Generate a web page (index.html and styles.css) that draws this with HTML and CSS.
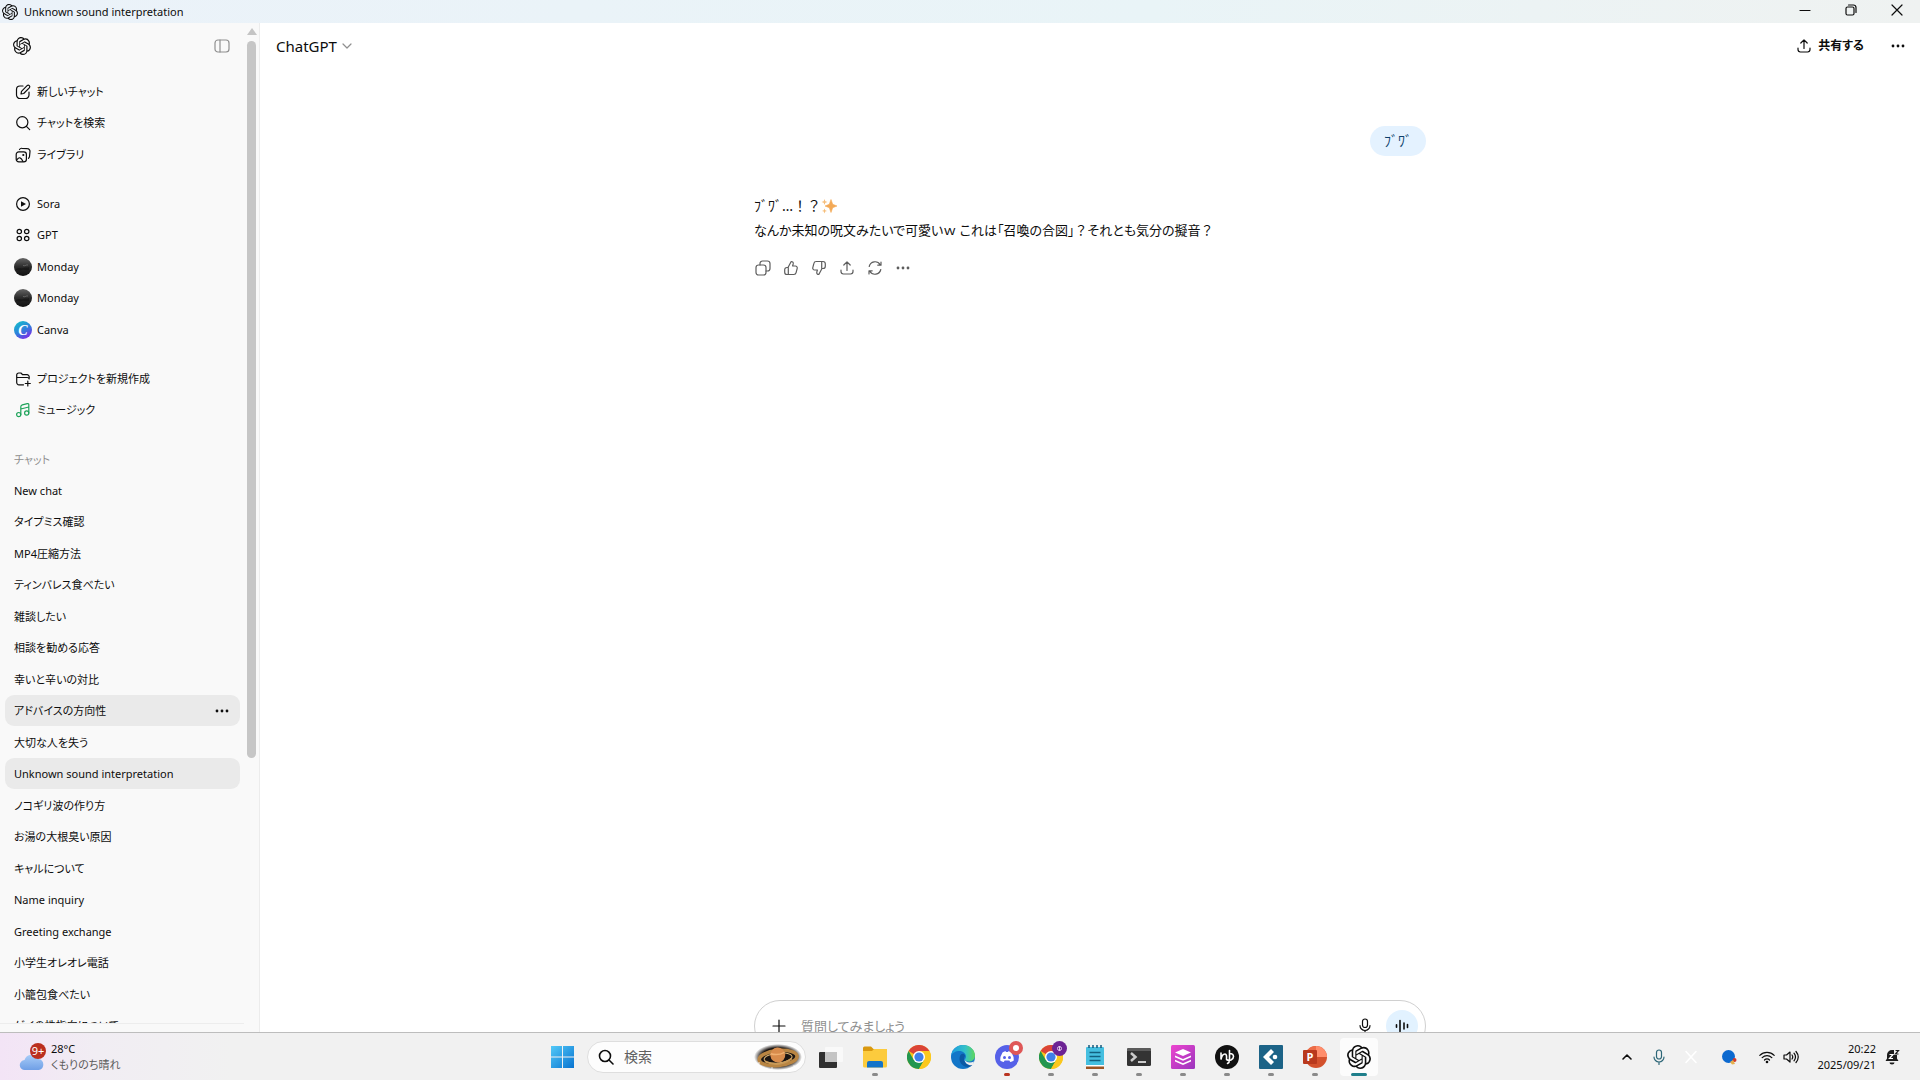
FILE: index.html
```html
<!DOCTYPE html>
<html lang="ja">
<head>
<meta charset="utf-8">
<title>Unknown sound interpretation</title>
<link rel="stylesheet" href="styles.css">
</head>
<body>
<svg class="sprite" aria-hidden="true">
  <symbol id="openai" viewBox="0 0 24 24"><path fill="currentColor" d="M22.2819 9.8211a5.9847 5.9847 0 0 0-.5157-4.9108 6.0462 6.0462 0 0 0-6.5098-2.9A6.0651 6.0651 0 0 0 4.9807 4.1818a5.9847 5.9847 0 0 0-3.9977 2.9 6.0462 6.0462 0 0 0 .7427 7.0966 5.98 5.98 0 0 0 .511 4.9107 6.051 6.051 0 0 0 6.5146 2.9001A5.9847 5.9847 0 0 0 13.2599 24a6.0557 6.0557 0 0 0 5.7718-4.2058 5.9894 5.9894 0 0 0 3.9977-2.9001 6.0557 6.0557 0 0 0-.7475-7.0729zm-9.022 12.6081a4.4755 4.4755 0 0 1-2.8764-1.0408l.1419-.0804 4.7783-2.7582a.7948.7948 0 0 0 .3927-.6813v-6.7369l2.02 1.1686a.071.071 0 0 1 .038.052v5.5826a4.504 4.504 0 0 1-4.4945 4.4944zm-9.6607-4.1254a4.4708 4.4708 0 0 1-.5346-3.0137l.142.0852 4.783 2.7582a.7712.7712 0 0 0 .7806 0l5.8428-3.3685v2.3324a.0804.0804 0 0 1-.0332.0615L9.74 19.9502a4.4992 4.4992 0 0 1-6.1408-1.6464zM2.3408 7.8956a4.485 4.485 0 0 1 2.3655-1.9728V11.6a.7664.7664 0 0 0 .3879.6765l5.8144 3.3543-2.0201 1.1685a.0757.0757 0 0 1-.071 0l-4.8303-2.7865A4.504 4.504 0 0 1 2.3408 7.872zm16.5963 3.8558L13.1038 8.364 15.1192 7.2a.0757.0757 0 0 1 .071 0l4.8303 2.7913a4.4944 4.4944 0 0 1-.6765 8.1042v-5.6772a.79.79 0 0 0-.407-.667zm2.0107-3.0231l-.142-.0852-4.7735-2.7818a.7759.7759 0 0 0-.7854 0L9.409 9.2297V6.8974a.0662.0662 0 0 1 .0284-.0615l4.8303-2.7866a4.4992 4.4992 0 0 1 6.6802 4.66zM8.3065 12.863l-2.02-1.1638a.0804.0804 0 0 1-.038-.0567V6.0742a4.4992 4.4992 0 0 1 7.3757-3.4537l-.142.0805L8.704 5.459a.7948.7948 0 0 0-.3927.6813zm1.0976-2.3654l2.602-1.4998 2.6069 1.4998v2.9994l-2.5974 1.4997-2.6067-1.4997Z"/></symbol>
  <symbol id="dots" viewBox="0 0 16 16"><g fill="currentColor"><circle cx="3" cy="8" r="1.4"/><circle cx="8" cy="8" r="1.4"/><circle cx="13" cy="8" r="1.4"/></g></symbol>
  <symbol id="share" viewBox="0 0 16 16"><path class="line" d="M2 10v1.6A2.4 2.4 0 0 0 4.4 14h7.200A2.4 2.4 0 0 0 14 11.600V10M8 10.500V2M4.800 5 8 1.800 11.200 5"/></symbol>
  <symbol id="monday" viewBox="0 0 18 18"><circle cx="9" cy="9" r="9" fill="url(#moon)"/><path d="M2 11c3-2 5 0 7-1s4 0 6-1v3c-4 1-5-1-7 0s-4 0-6 0z" fill="#000" opacity=".3"/><path d="M9 7.500c2 1 3-1 5-.5" stroke="#999" stroke-width=".8" fill="none" opacity=".6"/></symbol>
  <symbol id="chrome" viewBox="0 0 24 24"><circle cx="12" cy="12" r="12" fill="#f9c31b"/><path d="M12 12 1.600 6A12 12 0 0 1 22.400 6L12 6z" fill="#db4437"/><path d="M1.600 6A12 12 0 0 0 12 24l5.200-9L12 12 6.800 15z" fill="#23964f"/><path d="M12 6h10.400A12 12 0 0 1 12 24l5.200-9z" fill="#fbc81e"/><circle cx="12" cy="12" r="6" fill="#fff"/><circle cx="12" cy="12" r="4.600" fill="#3f7fe8"/></symbol>
  <defs>
    <linearGradient id="moon" x1="0" y1="0" x2="0" y2="1"><stop offset="0" stop-color="#666"/><stop offset=".5" stop-color="#2a2a2a"/><stop offset="1" stop-color="#111"/></linearGradient>
    <linearGradient id="canvaFill" x1=".1" y1="0" x2=".7" y2="1"><stop offset="0" stop-color="#12c3c9"/><stop offset=".55" stop-color="#2f80dc"/><stop offset="1" stop-color="#7d2ae7"/></linearGradient>
    <linearGradient id="winFill" x1="0" y1="0" x2="1" y2="1"><stop offset="0" stop-color="#52c9f8"/><stop offset="1" stop-color="#0873d0"/></linearGradient>
    <linearGradient id="edgeTop" x1="0" y1="0" x2="1" y2="0"><stop offset="0" stop-color="#1a9be0"/><stop offset=".6" stop-color="#35c1c8"/><stop offset="1" stop-color="#5fd85a"/></linearGradient>
    <linearGradient id="stackFill" x1="0" y1="0" x2="1" y2="1"><stop offset="0" stop-color="#ee45cf"/><stop offset="1" stop-color="#9a35bd"/></linearGradient>
    <linearGradient id="cloudFill" x1="0" y1="0" x2="0" y2="1"><stop offset="0" stop-color="#a9cdf8"/><stop offset="1" stop-color="#6f9fe6"/></linearGradient>
    <radialGradient id="space"><stop offset=".7" stop-color="#1b1512"/><stop offset="1" stop-color="#1b1512" stop-opacity="0"/></radialGradient>
  </defs>
</svg>

<header class="titlebar">
  <svg class="i16"><use href="#openai"/></svg>
  <span class="titlebar-name">Unknown sound interpretation</span>
  <button class="win-btn" aria-label="最小化"><svg class="i12" viewBox="0 0 12 12"><path class="line" d="M1 6.500h10"/></svg></button>
  <button class="win-btn" aria-label="元に戻す"><svg class="i12" viewBox="0 0 12 12"><rect class="line" x="1" y="3" width="8" height="8" rx="1.500"/><path class="line" d="M3.500 1h5A2.500 2.500 0 0 1 11 3.500v5"/></svg></button>
  <button class="win-btn" aria-label="閉じる"><svg class="i12" viewBox="0 0 12 12"><path class="line" d="m1 1 10 10M11 1 1 11"/></svg></button>
</header>

<div class="workspace">
  <aside class="sidebar">
    <div class="sidebar-content">
      <div class="sidebar-head">
        <a href="#" aria-label="ホーム"><svg class="i18"><use href="#openai"/></svg></a>
        <button class="icon-btn muted" aria-label="サイドバーを閉じる"><svg class="i16" viewBox="0 0 16 16"><rect class="line" x="1" y="2" width="14" height="12" rx="3"/><path class="line" d="M6 2v12"/></svg></button>
      </div>
      <nav class="sidebar-nav">
        <ul class="group">
          <li><a class="row" href="#"><svg class="i18" viewBox="0 0 18 18"><path class="line" d="M9 3H6a3.500 3.500 0 0 0-3.500 3.500V12A3.500 3.500 0 0 0 6 15.500h5.500A3.500 3.500 0 0 0 15 12V9M7 11l.5-2.700 5.600-5.600a1.500 1.500 0 0 1 2.200 2.200L9.700 10.500z"/></svg>新しいチャット</a></li>
          <li><a class="row" href="#"><svg class="i18" viewBox="0 0 18 18"><circle class="line" cx="8.300" cy="8.300" r="5.600"/><path class="line" d="m12.400 12.400 3.300 3.300"/></svg>チャットを検索</a></li>
          <li><a class="row" href="#"><svg class="i18" viewBox="0 0 18 18"><rect class="line" x="2.200" y="5.800" width="10.200" height="10" rx="2.600"/><path class="line" d="M5.500 3.500A2.500 2.500 0 0 1 8 2.300l5.500.4A2.600 2.600 0 0 1 16 5.500l-.5 5a2.600 2.600 0 0 1-1 1.800M3 13.600c2-2.800 4-2.600 6 1.800"/><circle cx="9.300" cy="9" r="1.100" fill="currentColor"/></svg>ライブラリ</a></li>
        </ul>
        <ul class="group">
          <li><a class="row" href="#"><svg class="i18" viewBox="0 0 18 18"><circle class="line" cx="9" cy="9" r="6.400"/><path d="M7 6.200v5.600L12 9z" fill="currentColor"/></svg>Sora</a></li>
          <li><a class="row" href="#"><svg class="i18" viewBox="0 0 18 18"><g class="line"><circle cx="5.300" cy="5.500" r="2.200"/><circle cx="12.700" cy="5.500" r="2.200"/><circle cx="5.300" cy="12.500" r="2.200"/><circle cx="12.700" cy="12.500" r="2.200"/></g></svg>GPT</a></li>
          <li><a class="row" href="#"><svg class="i18"><use href="#monday"/></svg>Monday</a></li>
          <li><a class="row" href="#"><svg class="i18"><use href="#monday"/></svg>Monday</a></li>
          <li><a class="row" href="#"><svg class="i18" viewBox="0 0 18 18"><circle cx="9" cy="9" r="9" fill="url(#canvaFill)"/><text class="canva-mark" x="9" y="14" text-anchor="middle">C</text></svg>Canva</a></li>
        </ul>
        <ul class="group">
          <li><a class="row" href="#"><svg class="i18" viewBox="0 0 18 18"><path class="line" d="M9.500 14.800H5A2.300 2.300 0 0 1 2.700 12.500V5A2 2 0 0 1 4.700 3h2.200l1.800 1.700h4.200A2.200 2.200 0 0 1 15.200 7v1M2.700 7.500h10.500a2 2 0 0 1 2 1.500M13.800 11v5M11.300 13.500h5"/></svg>プロジェクトを新規作成</a></li>
          <li><a class="row" href="#"><svg class="i18 green" viewBox="0 0 18 18"><path class="line" d="M6.800 13.500V5.800c0-1 .6-1.600 1.500-1.900l5-1.300c.9-.2 1.500.2 1.500 1v8.300M6.800 8l8-2"/><circle class="line" cx="4.700" cy="13.600" r="2.100"/><circle class="line" cx="12.700" cy="12" r="2.100"/></svg>ミュージック</a></li>
        </ul>
        <h2 class="group-label">チャット</h2>
        <ul class="history">
          <li><a class="row" href="#">New chat</a></li>
          <li><a class="row" href="#">タイプミス確認</a></li>
          <li><a class="row" href="#">MP4圧縮方法</a></li>
          <li><a class="row" href="#">ティンバレス食べたい</a></li>
          <li><a class="row" href="#">雑談したい</a></li>
          <li><a class="row" href="#">相談を勧める応答</a></li>
          <li><a class="row" href="#">幸いと辛いの対比</a></li>
          <li class="selected"><a class="row" href="#">アドバイスの方向性</a><button class="icon-btn" aria-label="オプション"><svg class="i16"><use href="#dots"/></svg></button></li>
          <li><a class="row" href="#">大切な人を失う</a></li>
          <li class="selected"><a class="row" href="#">Unknown sound interpretation</a></li>
          <li><a class="row" href="#">ノコギリ波の作り方</a></li>
          <li><a class="row" href="#">お湯の大根臭い原因</a></li>
          <li><a class="row" href="#">キャルについて</a></li>
          <li><a class="row" href="#">Name inquiry</a></li>
          <li><a class="row" href="#">Greeting exchange</a></li>
          <li><a class="row" href="#">小学生オレオレ電話</a></li>
          <li><a class="row" href="#">小籠包食べたい</a></li>
          <li><a class="row" href="#">ゲイの性指向について</a></li>
        </ul>
      </nav>
    </div>
    <div class="scrollbar" aria-hidden="true"><span class="scroll-up"></span><span class="scroll-thumb"></span></div>
  </aside>

  <main class="main">
    <div class="main-head">
      <button class="model-btn">ChatGPT<svg class="i10 muted" viewBox="0 0 10 10"><path class="line" d="m1 3 4 4 4-4"/></svg></button>
      <button class="share-btn"><svg class="i16"><use href="#share"/></svg>共有する</button>
      <button class="icon-btn" aria-label="その他"><svg class="i16"><use href="#dots"/></svg></button>
    </div>
    <div class="thread">
      <p class="bubble">ﾌﾞﾜﾞ</p>
      <div class="reply">
        <p class="reply-exclaim">ﾌﾞﾜﾞ…！？<svg class="i16" viewBox="0 0 16 16" role="img" aria-label="きらきら"><path d="M10 1.500 11.700 6.300 16 8l-4.300 1.700L10 14.500 8.300 9.700 4 8l4.300-1.700z" fill="#f3a956" stroke="#f3a956" stroke-width=".6" stroke-linejoin="round"/><path d="m3.500 1 .8 2.200 2.200.8-2.200.8-.8 2.200-.8-2.200L.5 4l2.200-.8zM3.500 10.500l.7 1.700 1.800.7-1.800.7-.7 1.900-.7-1.900-1.800-.7 1.800-.7z" fill="#f6bd79"/></svg></p>
        <p class="reply-text">なんか未知の呪文みたいで可愛いｗ これは「召喚の合図」<span class="wide">？</span>それとも気分の擬音<span class="wide">？</span></p>
      </div>
      <div class="actions">
        <button class="icon-btn" aria-label="コピー"><svg class="i16" viewBox="0 0 16 16"><rect class="line" x="1" y="5" width="10" height="10" rx="2.500"/><path class="line" d="M5 5V3.500A2.500 2.500 0 0 1 7.500 1h5A2.500 2.500 0 0 1 15 3.500v5a2.500 2.500 0 0 1-2.500 2.500H11"/></svg></button>
        <button class="icon-btn" aria-label="良い回答"><svg class="i16" viewBox="0 0 16 16"><path class="line" d="M5 7.500 8.200 1.500c1.500 0 2.300 1 2 2.400L9.600 6h2.800a1.900 1.900 0 0 1 1.800 2.400l-1.100 4.200A2.400 2.400 0 0 1 10.800 14.500H4A2.300 2.300 0 0 1 1.700 12.200V9.800A2.300 2.300 0 0 1 4 7.500h1M5.300 7.500v7"/></svg></button>
        <button class="icon-btn" aria-label="良くない回答"><svg class="i16" viewBox="0 0 16 16"><path class="line" d="M11 8.500 7.800 14.500c-1.500 0-2.300-1-2-2.400L6.400 10H3.600a1.900 1.900 0 0 1-1.800-2.400l1.100-4.200A2.400 2.400 0 0 1 5.200 1.500H12a2.300 2.300 0 0 1 2.300 2.300v2.400A2.300 2.300 0 0 1 12 8.500h-1M10.700 8.500v-7"/></svg></button>
        <button class="icon-btn" aria-label="共有"><svg class="i16"><use href="#share"/></svg></button>
        <button class="icon-btn" aria-label="再生成"><svg class="i16" viewBox="0 0 16 16"><path class="line" d="M2.200 6.500a6 6 0 0 1 11-1.800M14 2v3.200h-3.200M13.800 9.500a6 6 0 0 1-11 1.800M2 14v-3.200h3.200"/></svg></button>
        <button class="icon-btn" aria-label="その他の操作"><svg class="i16"><use href="#dots"/></svg></button>
      </div>
    </div>
    <form class="composer">
      <button type="button" class="icon-btn" aria-label="追加"><svg class="i16" viewBox="0 0 16 16"><path class="line" d="M8 2v12M2 8h12"/></svg></button>
      <input type="text" class="prompt" placeholder="質問してみましょう" aria-label="質問してみましょう">
      <button type="button" class="icon-btn" aria-label="音声入力"><svg class="i16" viewBox="0 0 16 16"><rect class="line" x="5.500" y="1" width="5" height="8.500" rx="2.500"/><path class="line" d="M3 7.500a5 5 0 0 0 10 0M8 12.500V15"/></svg></button>
      <button type="button" class="voice-btn" aria-label="音声モード"><svg class="i16" viewBox="0 0 16 16"><path class="line thick" d="M2.500 6.800v2.400M6 2.500v11M10 5v6M13.500 6.500v3"/></svg></button>
    </form>
  </main>
</div>

<footer class="taskbar">
  <button class="weather">
    <svg class="weather-icon" viewBox="0 0 28 30"><path d="M6 28a5 5 0 0 1-.5-10 7.500 7.500 0 0 1 14-1A5.600 5.600 0 0 1 20 28z" fill="url(#cloudFill)"/><circle cx="19" cy="9" r="8" fill="#bb2f1e"/><text class="badge-text" x="19" y="13" text-anchor="middle">9+</text></svg>
    <span class="weather-text"><span>28°C</span><span class="weather-desc">くもりのち晴れ</span></span>
  </button>
  <div class="apps">
    <button class="app" aria-label="スタート"><svg class="i24" viewBox="0 0 24 24"><path d="M0 1h11v10.500H0zM12 1h11v10.500H12zM0 12.500h11V23H0zM12 12.500h11V23H12z" fill="url(#winFill)"/></svg></button>
    <label class="search">
      <svg class="i16" viewBox="0 0 16 16"><circle class="line thick" cx="7" cy="7" r="5.500"/><path class="line thick" d="m11 11 4 4"/></svg>
      <input type="text" class="search-input" placeholder="検索" aria-label="検索">
      <svg class="saturn" viewBox="0 0 48 26"><ellipse cx="24" cy="13" rx="24" ry="13" fill="url(#space)"/><g transform="rotate(-6 24 13)"><ellipse cx="24" cy="14" rx="19" ry="7.500" fill="none" stroke="#b98542" stroke-width="3.500"/><ellipse cx="24" cy="14" rx="14" ry="5" fill="none" stroke="#e0b878" stroke-width="1"/><circle cx="24" cy="11" r="7.500" fill="#d88c4c"/><path d="M17 9q7 3 14 0" stroke="#f0b070" stroke-width="1.500" fill="none"/><path d="M10.500 16Q24 24 37.500 16" stroke="#c99a58" stroke-width="2" fill="none"/></g><g fill="#fff"><circle cx="5" cy="19" r=".8"/><circle cx="18" cy="24" r=".7"/><circle cx="40" cy="22" r=".7"/></g></svg>
    </label>
    <button class="app" aria-label="タスク ビュー"><svg class="i24" viewBox="0 0 24 24"><rect y="7" width="18" height="16" rx="1" fill="#303030"/><rect x="6" y="2" width="18" height="15" rx="1" fill="#f9f9f9"/><path d="M6 7h12v10H6z" fill="#c4c4c4"/></svg></button>
    <button class="app running" aria-label="エクスプローラー"><svg class="i24" viewBox="0 0 24 24"><path d="M0 3a1.500 1.500 0 0 1 1.500-1.500H8L10.500 4H24v8H0z" fill="#d9980f"/><path d="M0 6h9l2-2h13v17a1.500 1.500 0 0 1-1.500 1.500h-21A1.500 1.500 0 0 1 0 21z" fill="#fccb3d"/><path d="M4 22.500V18a2 2 0 0 1 2-2h12a2 2 0 0 1 2 2v4.500z" fill="#1374c9"/></svg></button>
    <button class="app" aria-label="Chrome"><svg class="i24"><use href="#chrome"/></svg></button>
    <button class="app" aria-label="Edge"><svg class="i24" viewBox="0 0 24 24"><circle cx="12" cy="12" r="12" fill="#1376c8"/><path d="M0 11C1 4 6 0 12 0c7 0 12 5 12 10.500 0 4-3 6-6.500 6-2.500 0-3.500-1-3.500-2 0-.8 1-1.300 1-3C15 8.500 12 6 8.500 6 4.500 6 1 8 0 11z" fill="url(#edgeTop)"/><path d="M9 11c-2 5 2 11 8 11 2 0 4-1 5-3-5 2-9-1-9-5 0-2 1-2.500 1-3.500C13 8 10 8.500 9 11z" fill="#0c59a4"/><path d="M13.500 14c.5 3 5 4.500 9.500 2.500L22 20c-4 1-8-1-8.500-6z" fill="#f0f0f0"/></svg></button>
    <button class="app running alert" aria-label="Discord"><svg class="app-badged" viewBox="0 0 28 28"><circle cx="12" cy="16" r="12" fill="#5661e8"/><path d="M7.500 11.500q2-1.300 3.200-1.300l.4.800h1.800l.4-.8q1.200 0 3.200 1.300 2.500 4 2.300 8-1.600 1.300-3.600 1.500l-.8-1.500h-4.800L8.800 21q-2-.2-3.600-1.500-.2-4 2.300-8z" fill="#fff"/><circle cx="9.500" cy="16.500" r="1.500" fill="#5661e8"/><circle cx="14.500" cy="16.500" r="1.500" fill="#5661e8"/><circle cx="21" cy="7" r="7" fill="#df5757"/><circle cx="21" cy="7" r="3" fill="#fff"/></svg></button>
    <button class="app running" aria-label="Chrome プロファイル"><svg class="app-badged" viewBox="0 0 28 28"><svg y="4" width="24" height="24"><use href="#chrome"/></svg><circle cx="20.500" cy="7.500" r="7.500" fill="#6d2394"/><circle cx="20.500" cy="7.500" r="2" fill="none" stroke="#e4c9ee"/><path d="M20.500 5v5" stroke="#e4c9ee"/></svg></button>
    <button class="app running" aria-label="メモ帳"><svg class="i24" viewBox="0 0 24 24"><rect x="3" y="2" width="18" height="19" rx="1" fill="#45bfe0"/><path d="M3 21h18v3H3z" fill="#9b5525"/><path d="M3 20h18v1.500H3z" fill="#fff"/><path d="M6 0v3M10 0v3M14 0v3M18 0v3" stroke="#155a7c" stroke-width="1.500"/><path d="M6.500 7.500h11M6.500 11.500h11M6.500 15.500h11" stroke="#12607f" stroke-width="1.500"/></svg></button>
    <button class="app running" aria-label="ターミナル"><svg class="i24" viewBox="0 0 24 24"><rect y="3" width="24" height="18" rx="1.500" fill="#333"/><path d="M0 6V4.500A1.500 1.500 0 0 1 1.500 3h21A1.500 1.500 0 0 1 24 4.500V6z" fill="#5b5b5b"/><path d="m4 8 4.500 4L4 16" stroke="#ccc" stroke-width="2.500" fill="none"/><path d="M11 17h8" stroke="#fff" stroke-width="1.500"/></svg></button>
    <button class="app running" aria-label="スタック"><svg class="i24" viewBox="0 0 24 24"><rect width="24" height="24" rx="1.500" fill="url(#stackFill)"/><path d="m12 4 8 3.500-8 3.500-8-3.500zM4 10.500l8 3.500 8-3.500v1.700l-8 3.500-8-3.500zM4 14.700l8 3.500 8-3.500v1.700l-8 3.500-8-3.500z" fill="#fff"/></svg></button>
    <button class="app running" aria-label="音声ソフト"><svg class="i24" viewBox="0 0 24 24"><circle cx="12" cy="12" r="12" fill="#111"/><path d="M6 8v6.500Q7 9 10 9q2 0 1.500 5M14.500 5.500V15q0 2.500-2 3.500M11.500 14.500q2 1.500 4.500.5 2.500-1.200 2.500-3.500 0-3-4-3" stroke="#fff" stroke-width="1.600" fill="none" stroke-linecap="round"/></svg></button>
    <button class="app running" aria-label="Cubase"><svg class="i24" viewBox="0 0 24 24"><rect width="24" height="24" rx="1" fill="#1c6387"/><path d="m4 12 8-8 3 3-5 5 5 5-3 3z" fill="#fff"/><circle cx="16" cy="12" r="2.300" fill="#fff"/></svg></button>
    <button class="app running" aria-label="PowerPoint"><svg class="i24" viewBox="0 0 24 24"><circle cx="13" cy="12" r="11" fill="#d3512d"/><path d="M13 1a11 11 0 0 1 11 11H13z" fill="#ff8d6b"/><path d="M13 1v11H2A11 11 0 0 1 13 1z" fill="#ed6c47"/><rect y="5" width="14" height="14" rx="1" fill="#b9391d"/><text class="ppt-mark" x="7" y="16" text-anchor="middle">P</text></svg></button>
    <button class="app running active" aria-label="ChatGPT"><svg class="i24"><use href="#openai"/></svg></button>
  </div>
  <div class="tray">
    <button class="tray-btn" aria-label="隠れているインジケーター"><svg class="i12" viewBox="0 0 12 12"><path class="line thick" d="m2 8 4-4 4 4"/></svg></button>
    <button class="tray-btn" aria-label="マイク"><svg class="i16 teal" viewBox="0 0 16 16"><rect class="line" x="5.500" y="1" width="5" height="9" rx="2.500"/><path class="line" d="M3 8a5 5 0 0 0 10 0M8 13v2.500"/></svg></button>
    <button class="tray-btn" aria-label="通知なし"><svg class="i16 white" viewBox="0 0 16 16"><path class="line thick" d="m3 2.500 10 11M13 2.500l-10 11"/></svg></button>
    <button class="tray-btn wide-btn" aria-label="同期"><svg class="i16" viewBox="0 0 16 16"><circle cx="7.500" cy="7.500" r="6.500" fill="#0c69cf"/><circle cx="13.500" cy="11" r="2" fill="#d03a2b"/><path d="m9 13 3-2 2 4-3 .5z" fill="#e5b04c"/></svg></button>
    <button class="tray-btn network" aria-label="ネットワークと音量"><svg class="i16" viewBox="0 0 16 16"><path class="line" d="M.8 6.300a10.200 10.200 0 0 1 14.400 0M3.200 8.700a6.800 6.800 0 0 1 9.600 0M5.500 11a3.500 3.500 0 0 1 5 0"/><circle cx="8" cy="13" r="1.300" fill="currentColor"/></svg><svg class="i16" viewBox="0 0 16 16"><path class="line" d="M1 6v4h2.500L7 13V3L3.500 6zM9 6q1.500 2 0 4M11 4.200q3 3.800 0 7.600M13 2.500q4.500 5.500 0 11"/></svg></button>
    <button class="clock"><span>20:22</span><span>2025/09/21</span></button>
    <button class="bell" aria-label="通知"><svg class="i16" viewBox="0 0 16 16"><path d="M1.500 12 3 9.500V6a5 5 0 0 1 5-5h2v5h3v3.500l1.500 2.500z" fill="#1c1c1c"/><path d="M5.500 13.500a2.500 2 0 0 0 5 0z" fill="#1c1c1c"/><path d="M5.500 5.500h3.500l-3.500 4H9" fill="none" stroke="#fff" stroke-width="1.200"/><path d="M11.500 1.500h3l-3 3.500h3" fill="none" stroke="#1c1c1c" stroke-width="1.200"/></svg></button>
  </div>
</footer>
</body>
</html>
```
FILE: styles.css
```css
* { box-sizing: border-box; }

html, body { height: 100%; }

body {
  margin: 0;
  display: flex;
  flex-direction: column;
  overflow: hidden;
  background: #fff;
  color: #0d0d0d;
  font-family: "Noto Sans", "Noto Sans CJK JP", sans-serif;
  font-size: 11px;
  line-height: 16px;
  font-feature-settings: "palt";
}

h2, p, ul { margin: 0; padding: 0; }
ul { list-style: none; }
a { color: inherit; text-decoration: none; }

button, input {
  margin: 0;
  padding: 0;
  border: 0;
  background: none;
  color: inherit;
  font: inherit;
  font-feature-settings: inherit;
}

svg { display: block; flex: none; }
.sprite { position: absolute; width: 0; height: 0; }

.line {
  fill: none;
  stroke: currentColor;
  stroke-width: 1.2;
  stroke-linecap: round;
  stroke-linejoin: round;
}
.line.thick { stroke-width: 1.6; }

.i10 { width: 10px; height: 10px; }
.i12 { width: 12px; height: 12px; }
.i16 { width: 16px; height: 16px; }
.i18 { width: 18px; height: 18px; }
.i24 { width: 24px; height: 24px; }

.muted { color: #8f8f8f; }
.green { color: #1ea35a; }
.teal { color: #2c6677; }
.white { color: #fff; }

.icon-btn {
  display: flex;
  align-items: center;
  justify-content: center;
  width: 28px;
  height: 28px;
}

/* Window title bar */
.titlebar {
  display: flex;
  align-items: center;
  flex: none;
  height: 23px;
  padding-left: 2px;
  background: linear-gradient(90deg, #ebf2f9, #e9f4f7 60%, #eff2f1);
}
.titlebar-name { flex: 1; padding-left: 6px; }
.win-btn {
  display: flex;
  align-items: center;
  align-self: flex-start;
  justify-content: center;
  width: 46px;
  height: 20px;
}

.workspace { flex: 1; display: flex; min-height: 0; }

/* Sidebar */
.sidebar {
  display: flex;
  flex: none;
  width: 260px;
  padding-bottom: 8px;
  background: #f9f9f9;
  border-right: 1px solid #ececec;
}
.sidebar-content {
  flex: 1;
  min-width: 0;
  padding-left: 5px;
  overflow: hidden;
  border-bottom: 1px solid #ededed;
}
.sidebar-head {
  display: flex;
  align-items: center;
  justify-content: space-between;
  height: 45px;
  padding: 0 8px;
}
.sidebar-nav { padding: 8px 4px 0 0; }
.group, .history { display: grid; grid-auto-rows: 31px 32px; }
.group { margin-bottom: 18px; }
.group li, .history li { display: flex; align-items: center; height: 31px; }
.row {
  flex: 1;
  display: flex;
  align-items: center;
  gap: 5px;
  height: 31px;
  padding-left: 9px;
  white-space: nowrap;
}
.canva-mark { fill: #fff; font: italic bold 14px "Liberation Serif", serif; }
.group-label {
  height: 31px;
  padding-left: 9px;
  color: #8f8f8f;
  font-size: 11px;
  font-weight: 400;
  line-height: 31px;
}
.selected { background: #eaeaea; border-radius: 9px; }
.selected .icon-btn { margin-right: 4px; }

.scrollbar {
  display: flex;
  flex-direction: column;
  align-items: center;
  width: 15px;
  padding-top: 5px;
}
.scroll-up {
  border: 5px solid transparent;
  border-top: 0;
  border-bottom: 7px solid #c4c4c4;
}
.scroll-thumb {
  width: 9px;
  height: 72%;
  margin-top: 6px;
  border-radius: 5px;
  background: #c6c6c6;
}

/* Conversation */
.main { flex: 1; display: flex; flex-direction: column; min-width: 0; }
.main-head {
  display: flex;
  align-items: center;
  height: 46px;
  padding: 0 8px 0 16px;
}
.model-btn {
  display: flex;
  align-items: center;
  gap: 5px;
  margin-right: auto;
  font-size: 15px;
}
.share-btn {
  display: flex;
  align-items: center;
  gap: 6px;
  margin-right: 20px;
  font-size: 12px;
  font-weight: 700;
}
.thread {
  flex: 1;
  display: flex;
  flex-direction: column;
  width: 100%;
  max-width: 672px;
  margin: 0 auto;
  padding-top: 57px;
  font-size: 14px;
}
.bubble {
  align-self: flex-end;
  height: 30px;
  padding: 0 14px;
  border-radius: 15px;
  background: #e4f2ff;
  color: #0b3f6b;
  line-height: 30px;
}
.reply { padding-top: 37px; line-height: 25px; }
.reply-exclaim { display: flex; align-items: center; font-feature-settings: normal; }
.reply-text { font-size: 13px; }
.wide { font-feature-settings: normal; }
.actions { display: flex; padding-top: 11px; margin-left: -5px; color: #5d5d5d; }

.composer {
  display: flex;
  align-items: center;
  flex: none;
  width: 100%;
  max-width: 672px;
  height: 52px;
  margin: 0 auto -20px;
  padding: 0 7px 0 10px;
  border: 1px solid #d0d0d0;
  border-radius: 26px;
}
.prompt { flex: 1; padding-left: 8px; font-size: 13px; outline: 0; }
.prompt::placeholder { color: #8f8f8f; }
.voice-btn {
  display: flex;
  align-items: center;
  justify-content: center;
  width: 32px;
  height: 32px;
  margin-left: 7px;
  border-radius: 16px;
  background: #e2f2ff;
}

/* Taskbar */
.taskbar {
  position: relative;
  display: grid;
  grid-template-columns: 1fr auto 1fr;
  flex: none;
  height: 48px;
  border-top: 1px solid #bdbdbd;
  background: linear-gradient(90deg, #f3e4f6, #f1edf3 5%, #f1f1f1 12%);
}
.weather {
  display: flex;
  align-items: center;
  gap: 4px;
  padding-left: 19px;
  text-align: left;
}
.weather-icon { width: 28px; height: 30px; }
.weather-text { display: flex; flex-direction: column; }
.weather-desc { color: #5b5b5b; }
.badge-text { fill: #fff; font-size: 11px; }

.apps { display: flex; align-items: center; padding-left: 2px; }
.app {
  position: relative;
  display: flex;
  align-items: center;
  justify-content: center;
  width: 44px;
  height: 47px;
}
.app-badged { width: 28px; height: 28px; margin: -4px 0 0 4px; }
.running::after {
  content: "";
  position: absolute;
  bottom: 4px;
  left: 19px;
  width: 6px;
  height: 3px;
  border-radius: 2px;
  background: #8a8a8a;
}
.alert::after { background: #b93420; }
.active::before {
  content: "";
  position: absolute;
  inset: 5px 3px 4px;
  border-radius: 4px;
  background: #fcfcfc;
}
.active svg { position: relative; }
.active::after { left: 14px; width: 16px; background: #1f7f8b; }
.ppt-mark { fill: #fff; font: bold 11px "Open Sans", sans-serif; }

.search {
  display: flex;
  align-items: center;
  width: 219px;
  height: 32px;
  margin: 0 3px 0 2px;
  padding: 0 3px 0 10px;
  border: 1px solid #dedede;
  border-radius: 16px;
  background: #fdfdfd;
}
.search-input {
  flex: 1;
  min-width: 0;
  padding-left: 10px;
  font-size: 14px;
  outline: 0;
}
.search-input::placeholder { color: #5f5f5f; }
.saturn { width: 48px; height: 26px; }

.tray { display: flex; align-items: center; justify-content: flex-end; }
.tray-btn {
  display: flex;
  align-items: center;
  justify-content: center;
  width: 32px;
  height: 40px;
}
.wide-btn { width: 44px; }
.network { gap: 8px; width: 56px; }
.clock {
  display: flex;
  flex-direction: column;
  width: 69px;
  text-align: right;
}
.bell { padding: 0 20px 0 8px; }
```
